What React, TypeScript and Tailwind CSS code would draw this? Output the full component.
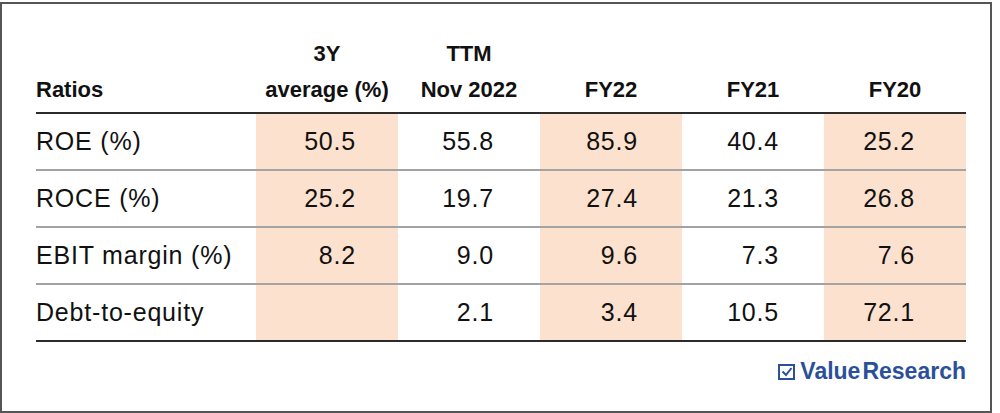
const columns = ['3Y average (%)', 'TTM Nov 2022', 'FY22', 'FY21', 'FY20']

const rows = [
  { label: 'ROE (%)', values: ['50.5', '55.8', '85.9', '40.4', '25.2'] },
  { label: 'ROCE (%)', values: ['25.2', '19.7', '27.4', '21.3', '26.8'] },
  { label: 'EBIT margin (%)', values: ['8.2', '9.0', '9.6', '7.3', '7.6'] },
  { label: 'Debt-to-equity', values: ['', '2.1', '3.4', '10.5', '72.1'] },
]

// right padding per column, so the figures sit where the print has them
const cellPad = ['pr-[42px]', 'pr-[46px]', 'pr-[44px]', 'pr-[45px]', 'pr-[51px]']
const shaded = [true, false, true, false, true]

function CheckIcon() {
  return (
    <svg width="17" height="16" viewBox="0 0 17 16" fill="none" className="mr-[5px]">
      <rect x="1" y="1" width="15" height="14" stroke="#2a509c" strokeWidth="2" />
      <path d="M4.5 7.5 L8 11 L13.5 4" stroke="#2a509c" strokeWidth="2" />
    </svg>
  )
}

export default function App() {
  return (
    <div className="w-[1000px] h-[413px] bg-white pt-[2px]" style={{ fontFamily: '"Liberation Sans", Arial, sans-serif' }}>
      <div className="w-[992px] h-[411px] border-2 border-[#555] pl-[34px] pt-[32px]">
        <div className="w-[930px]">
          <div className="grid grid-cols-[220px_repeat(5,142px)] items-end border-b-2 border-[#2b2b2b] pb-[4px] text-[22px] leading-[36px] font-bold whitespace-nowrap text-[#111]">
            <div>Ratios</div>
            <div className="text-center">3Y<br />average (%)</div>
            <div className="text-center">TTM<br />Nov 2022</div>
            <div className="text-center">FY22</div>
            <div className="text-center">FY21</div>
            <div className="text-center">FY20</div>
          </div>

          {rows.map((row, i) => (
            <div
              key={row.label}
              className={`grid grid-cols-[220px_repeat(5,142px)] h-[57px] border-b-2 text-[25px] tracking-[0.8px] whitespace-nowrap text-[#111] ${
                i === rows.length - 1 ? 'border-[#2b2b2b]' : 'border-[#a3a3a3]'
              }`}
            >
              <div className="flex items-center">{row.label}</div>
              {row.values.map((v, j) => (
                <div
                  key={columns[j]}
                  className={`flex items-center justify-end ${cellPad[j]} ${shaded[j] ? 'bg-[#fce1cf]' : ''}`}
                >
                  {v}
                </div>
              ))}
            </div>
          ))}

          <div className="flex justify-end mt-[18px]">
            <div className="flex items-center text-[23px] leading-none font-bold text-[#2a509c]">
              <CheckIcon />
              <span>Value</span>
              <span className="ml-[2px]">Research</span>
            </div>
          </div>
        </div>
      </div>
    </div>
  )
}
